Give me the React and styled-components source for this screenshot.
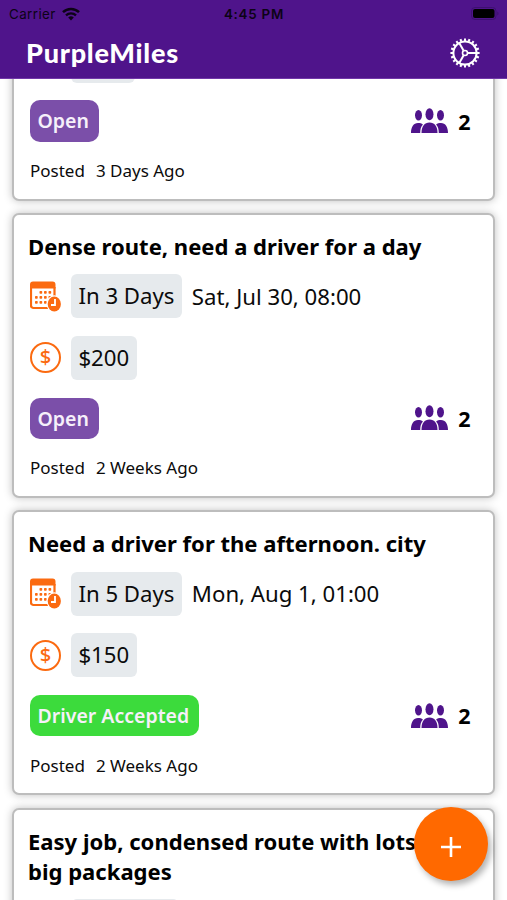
import styled, { createGlobalStyle } from "styled-components";

const GlobalStyle = createGlobalStyle`
  * {
    box-sizing: border-box;
  }

  body {
    margin: 0;
    background: #fff;
    color: #0b0b0b;
    font-family: "Noto Sans", sans-serif;
  }
`;

const Screen = styled.div`
  height: 100vh;
  overflow: hidden;
  display: flex;
  flex-direction: column;
`;

const Header = styled.header`
  position: relative;
  z-index: 1;
  flex: none;
  height: 79px;
  background: #4f148b;
  border-bottom: 1px solid #7138a8;
`;

const StatusBar = styled.div`
  height: 27px;
  padding: 0 8px 0 9px;
  display: grid;
  grid-template-columns: 1fr auto 1fr;
  align-items: center;
  color: #0c0316;
  font-family: Inter, sans-serif;
  font-size: 13.4px;
`;

const Carrier = styled.div`
  display: flex;
  align-items: center;
  gap: 6px;
  letter-spacing: 0.4px;
`;

const Time = styled.div`
  font-weight: 600;
  letter-spacing: 0.75px;
`;

const Battery = styled.svg`
  justify-self: end;
`;

const TitleBar = styled.div`
  height: 51px;
  padding: 0 27px 0 26px;
  display: flex;
  align-items: center;
  justify-content: space-between;
  color: #fff;
`;

const Logo = styled.h1`
  margin: 0;
  font-family: Lato, sans-serif;
  font-size: 27px;
  font-weight: 900;
  letter-spacing: 0.75px;
  line-height: 48px;
`;

// the list is scrolled part of the way through its first card
const List = styled.main`
  flex: none;
  margin-top: -163.4px;
  padding: 0 12px;
  display: flex;
  flex-direction: column;
  gap: 12.3px;
`;

const Card = styled.article`
  flex: none;
  min-height: 285px;
  padding: 16px 22.5px 15.5px 14px;
  display: flex;
  flex-direction: column;
  justify-content: ${(props) => (props.$fromBottom ? "flex-end" : "flex-start")};
  border: 2px solid #bdbdbd;
  border-radius: 7px;
  background: #fff;
  box-shadow: 0 0 8px rgba(0, 0, 0, 0.25);
`;

const Title = styled.h2`
  margin: 0 0 13.4px;
  color: #000;
  font-size: 22.05px;
  font-weight: 700;
  line-height: 30px;
`;

const Row = styled.div`
  height: 44px;
  margin: 0 0 17.7px 2px;
  display: flex;
  align-items: center;
  gap: 10px;
  font-size: 22.2px;
  white-space: nowrap;
`;

const Pill = styled.span`
  height: 44px;
  min-width: ${(props) => props.$width || 0}px;
  padding: 0 7.4px;
  border-radius: 6px;
  background: #e6eaed;
  line-height: 44px;
`;

const IconSpace = styled.span`
  width: 31px;
`;

const Coin = styled.span`
  width: 31px;
  height: 31px;
  border: 2.3px solid #fb6a10;
  border-radius: 50%;
  color: #fb6a10;
  font-size: 20px;
  font-weight: 500;
  line-height: 26px;
  text-align: center;
`;

const Footer = styled.div`
  height: 41.5px;
  margin-left: 2px;
  display: flex;
  align-items: center;
  justify-content: space-between;
`;

const Badge = styled.span`
  height: 41.5px;
  padding: 0 10px 0 7.5px;
  border-radius: 10px;
  background: ${(props) => (props.$accepted ? "#3cdb3c" : "#7b4fa9")};
  color: #f6f0fa;
  font-size: 19.5px;
  font-weight: 600;
  line-height: 42px;
`;

const Drivers = styled.div`
  display: flex;
  align-items: center;
  gap: 10px;
  color: #000;
  font-size: 21.5px;
  font-weight: 700;
`;

const Posted = styled.p`
  margin: 17.2px 0 0 2px;
  display: flex;
  gap: 11px;
  font-size: 17px;
  line-height: 24px;
`;

const AddButton = styled.button`
  position: fixed;
  z-index: 2;
  left: 414px;
  top: 807px;
  width: 74px;
  height: 74px;
  padding: 6px 0 0;
  display: flex;
  align-items: center;
  justify-content: center;
  border: 0;
  border-radius: 50%;
  background: #ff6900;
  box-shadow: 3px 4px 6px rgba(0, 0, 0, 0.3);
`;

const WifiIcon = () => (
  <svg width="18" height="14" viewBox="0 0 18 14" fill="none">
    <path d="M1 5.2a11.4 11.4 0 0 1 16 0" stroke="currentColor" strokeWidth="2.5" />
    <path d="M4 8.4a7.2 7.2 0 0 1 10 0" stroke="currentColor" strokeWidth="2.3" />
    <path d="M6.2 10.6a4 4 0 0 1 5.6 0L9 13.6z" fill="currentColor" />
  </svg>
);

const BatteryIcon = () => (
  <Battery width="28" height="13" viewBox="0 0 28 13">
    <rect x="0.5" y="0.5" width="24.5" height="12" rx="3.5" fill="none" stroke="#3d1070" />
    <rect x="2" y="2" width="21.5" height="9" rx="2" fill="#000" />
    <path d="M26.3 4.5v4c1.6-.7 1.6-3.3 0-4z" fill="#3d1070" />
  </Battery>
);

const TEETH = 20;

const CogIcon = () => (
  <svg width="30" height="30" viewBox="-15 -15 30 30" fill="none" stroke="currentColor">
    <circle r="11.6" strokeWidth="2" />
    {Array.from({ length: TEETH }, (_, i) => (
      <path key={i} d="M12 0h2.6" strokeWidth="2" transform={`rotate(${(i * 360) / TEETH})`} />
    ))}
    <circle r="2.5" strokeWidth="1.6" />
    {[0, 120, 240].map((angle) => (
      <path key={angle} d="M3 0h8.5" strokeWidth="2" transform={`rotate(${angle})`} />
    ))}
  </svg>
);

const CalendarIcon = () => (
  <svg width="31" height="31" viewBox="0 0 31 31">
    <path d="M0 7.5V3.5a3 3 0 0 1 3-3h19.5a3 3 0 0 1 3 3V7.5z" fill="#fb6a10" />
    <path
      d="M1 6v18.5a2.5 2.5 0 0 0 2.5 2.5H18M24.5 6v9"
      fill="none"
      stroke="#fb6a10"
      strokeWidth="2.2"
    />
    <g fill="#fb6a10">
      {[10, 15, 20].map((y, row) =>
        [5, 9.5, 14, 18.5].map((x, col) =>
          (row === 0 && col === 0) || (row === 2 && col === 3) ? null : (
            <rect key={`${row}-${col}`} x={x} y={y} width="2.7" height="2.7" rx="0.7" />
          )
        )
      )}
    </g>
    <ellipse cx="24.3" cy="23" rx="7.7" ry="8.7" fill="#fff" />
    <ellipse cx="24.3" cy="23" rx="6.6" ry="7.5" fill="#fb6a10" />
    <path d="M25 18v6h-4" fill="none" stroke="#fff" strokeWidth="1.8" />
  </svg>
);

const PeopleIcon = () => (
  <svg width="37" height="26" viewBox="0 0 37 26" fill="#4f148b">
    <ellipse cx="7.5" cy="7.3" rx="3.5" ry="5.2" />
    <ellipse cx="29.5" cy="7.3" rx="3.5" ry="5.2" />
    <ellipse cx="18.5" cy="6.2" rx="4" ry="6" />
    <path d="M0 25c0-6 2.5-10 7-10 2 0 3.7.5 4.9 1.4C9.9 18.5 9.3 21 9.2 25z" />
    <path d="M37 25c0-6-2.5-10-7-10-2 0-3.7.5-4.9 1.4 2 2.1 2.6 4.6 2.7 8.6z" />
    <path d="M10.5 25c0-6.5 3-10.5 8-10.5s8 4 8 10.5z" />
  </svg>
);

const jobs = [
  { id: 2, title: "Dense route, need a driver for a day", due: "In 3 Days", date: "Sat, Jul 30, 08:00", price: "$200", posted: "2 Weeks Ago" },
  { id: 3, title: "Need a driver for the afternoon. city", due: "In 5 Days", date: "Mon, Aug 1, 01:00", price: "$150", posted: "2 Weeks Ago", accepted: true },
];

const JobFooter = ({ accepted, posted }) => (
  <>
    <Footer>
      <Badge $accepted={accepted}>{accepted ? "Driver Accepted" : "Open"}</Badge>
      <Drivers>
        <PeopleIcon />
        <span>2</span>
      </Drivers>
    </Footer>
    <Posted>
      <span>Posted</span>
      <span>{posted}</span>
    </Posted>
  </>
);

const Job = ({ job }) => (
  <Card>
    <Title>{job.title}</Title>
    <Row>
      <CalendarIcon />
      <Pill>{job.due}</Pill>
      <span>{job.date}</span>
    </Row>
    <Row>
      <Coin>$</Coin>
      <Pill>{job.price}</Pill>
    </Row>
    <JobFooter accepted={job.accepted} posted={job.posted} />
  </Card>
);

export default function App() {
  return (
    <Screen>
      <GlobalStyle />
      <Header>
        <StatusBar>
          <Carrier>
            Carrier
            <WifiIcon />
          </Carrier>
          <Time>4:45 PM</Time>
          <BatteryIcon />
        </StatusBar>
        <TitleBar>
          <Logo>PurpleMiles</Logo>
          <CogIcon />
        </TitleBar>
      </Header>
      <List>
        {/* scrolled under the header, only the end of it shows */}
        <Card $fromBottom>
          <Row>
            <IconSpace />
            <Pill $width={64} />
          </Row>
          <JobFooter posted="3 Days Ago" />
        </Card>
        {jobs.map((job) => (
          <Job key={job.id} job={job} />
        ))}
        <Card>
          <Title>Easy job, condensed route with lots of big packages</Title>
          <Row>
            <IconSpace />
            <Pill $width={108} />
          </Row>
        </Card>
      </List>
      <AddButton aria-label="Add job">
        <svg width="20" height="20" viewBox="0 0 20 20">
          <path d="M10 0v20M0 10h20" stroke="#fff" strokeWidth="2.6" />
        </svg>
      </AddButton>
    </Screen>
  );
}
